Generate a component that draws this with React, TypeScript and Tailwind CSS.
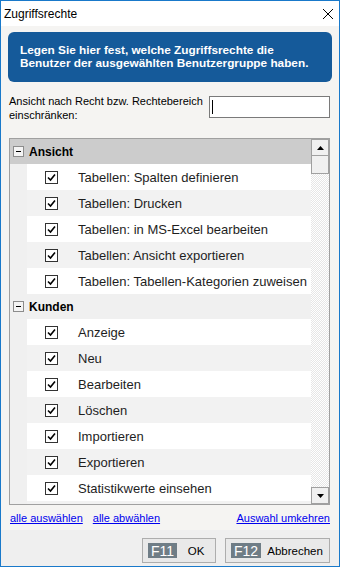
import React from 'react';

interface Group {
  name: string;
  selected?: boolean;
  items: string[];
}

const groups: Group[] = [
  {
    name: 'Ansicht',
    selected: true,
    items: [
      'Tabellen: Spalten definieren',
      'Tabellen: Drucken',
      'Tabellen: in MS-Excel bearbeiten',
      'Tabellen: Ansicht exportieren',
      'Tabellen: Tabellen-Kategorien zuweisen',
    ],
  },
  {
    name: 'Kunden',
    items: ['Anzeige', 'Neu', 'Bearbeiten', 'Löschen', 'Importieren', 'Exportieren', 'Statistikwerte einsehen', 'Drucken'],
  },
];

function CheckBox() {
  return (
    <span className="flex h-[13px] w-[13px] items-center justify-center border border-[#333333] bg-white">
      <svg width="9" height="9" viewBox="0 0 9 9">
        <path d="M1 4.5 L3.5 7 L8 1.5" fill="none" stroke="#000" strokeWidth="1.6" />
      </svg>
    </span>
  );
}

function renderGroup(group: Group) {
  return (
    <div key={group.name}>
      <div className={`flex h-[25px] items-center ${group.selected ? 'bg-[#cccccc]' : 'bg-[#f0f0f0]'}`}>
        <span className="ml-[3px] flex h-[11px] w-[11px] items-center justify-center border border-[#8c8c8c] bg-[#f4f4f4]">
          <span className="h-px w-[5px] bg-black" />
        </span>
        <span className="ml-[5px] text-[12px] font-bold leading-[14px] text-black">{group.name}</span>
      </div>
      {group.items.map((item, i) => (
        <div key={item} className="flex h-[26px] bg-[#f0f0f0]">
          <div className={`ml-[17px] flex flex-1 items-center ${i % 2 === 0 ? 'bg-white' : 'bg-[#f2f2f2]'}`}>
            <span className="ml-[18px]">
              <CheckBox />
            </span>
            <span className="ml-[20px] whitespace-nowrap text-[13px] leading-[15px] text-[#1e1e1e]">{item}</span>
          </div>
        </div>
      ))}
    </div>
  );
}

function ScrollBar() {
  return (
    <div className="flex w-[18px] flex-col bg-[repeating-conic-gradient(#e6e6e6_0%_25%,#ffffff_0%_50%)] bg-[length:2px_2px]">
      <div className="flex h-[17px] items-center justify-center border border-[#a0a0a0] bg-[#f0f0f0]">
        <svg width="7" height="4" viewBox="0 0 7 4">
          <path d="M0 4 L3.5 0 L7 4 Z" fill="#000" />
        </svg>
      </div>
      <div className="h-[18px] border-x border-b border-[#a0a0a0] bg-[#f0f0f0]" />
      <div className="flex-1" />
      <div className="flex h-[17px] items-center justify-center border border-[#a0a0a0] bg-[#f0f0f0]">
        <svg width="7" height="4" viewBox="0 0 7 4">
          <path d="M0 0 L7 0 L3.5 4 Z" fill="#000" />
        </svg>
      </div>
    </div>
  );
}

function FKeyButton({ fkey, label, width }: { fkey: string; label: string; width: string }) {
  return (
    <button className={`flex h-[25px] items-center border border-[#adadad] bg-[#e9e9e9] ${width}`}>
      <span className="ml-[5px] flex h-[15px] items-center bg-[#6f7d86] px-[3px] text-[14px] leading-none text-white">
        {fkey}
      </span>
      <span className="flex-1 text-center text-[11.5px] leading-[14px] text-black">{label}</span>
    </button>
  );
}

export default function App() {
  return (
    <div
      className="flex h-[567px] w-[340px] flex-col overflow-hidden border border-[#1979ca] bg-[#f5f4f2]"
      style={{ fontFamily: '"Liberation Sans", Arial, sans-serif' }}
    >
      <div className="flex h-[25px] shrink-0 items-center justify-between bg-white pl-[3px] pr-[5px]">
        <span className="text-[12px] leading-[14px] text-black">Zugriffsrechte</span>
        <svg width="12" height="12" viewBox="0 0 12 12">
          <path d="M1 1 L11 11 M11 1 L1 11" stroke="#000" strokeWidth="1" />
        </svg>
      </div>

      <div className="mx-[7px] mt-[6px] flex h-[50px] shrink-0 flex-col justify-center rounded-[6px] bg-[#155a9a] pl-[12px] text-[11.8px] font-bold leading-[13px] text-white">
        <span>Legen Sie hier fest, welche Zugriffsrechte die</span>
        <span>Benutzer der ausgewählten Benutzergruppe haben.</span>
      </div>

      <div className="mt-[12px] flex h-[28px] shrink-0 items-start">
        <div className="ml-[8px] whitespace-nowrap text-[11px] leading-[14px] text-black">
          Ansicht nach Recht bzw. Rechtebereich
          <br />
          einschränken:
        </div>
        <div className="ml-auto mr-[9px] mt-[2px] flex h-[22px] w-[121px] shrink-0 items-center border border-[#7a7a7a] bg-white">
          <span className="ml-[2px] h-[14px] w-px bg-black" />
        </div>
      </div>

      <div className="ml-[8px] mr-[9px] mt-[16px] flex h-[367px] shrink-0 border border-[#a0a0a0] bg-[#f0f0f0]">
        <div className="flex-1 overflow-hidden">{groups.map(renderGroup)}</div>
        <ScrollBar />
      </div>

      <div className="mt-[5px] flex shrink-0 items-center px-[9px] text-[11px] leading-[16px] text-[#0000ee]">
        <span className="underline">alle auswählen</span>
        <span className="ml-[10px] underline">alle abwählen</span>
        <span className="ml-auto underline">Auswahl umkehren</span>
      </div>

      <div className="mt-[4px] flex flex-1 items-start justify-end gap-[9px] bg-[#efefef] pr-[9px] pt-[8px]">
        <FKeyButton fkey="F11" label="OK" width="w-[74px]" />
        <FKeyButton fkey="F12" label="Abbrechen" width="w-[105px]" />
      </div>
    </div>
  );
}
